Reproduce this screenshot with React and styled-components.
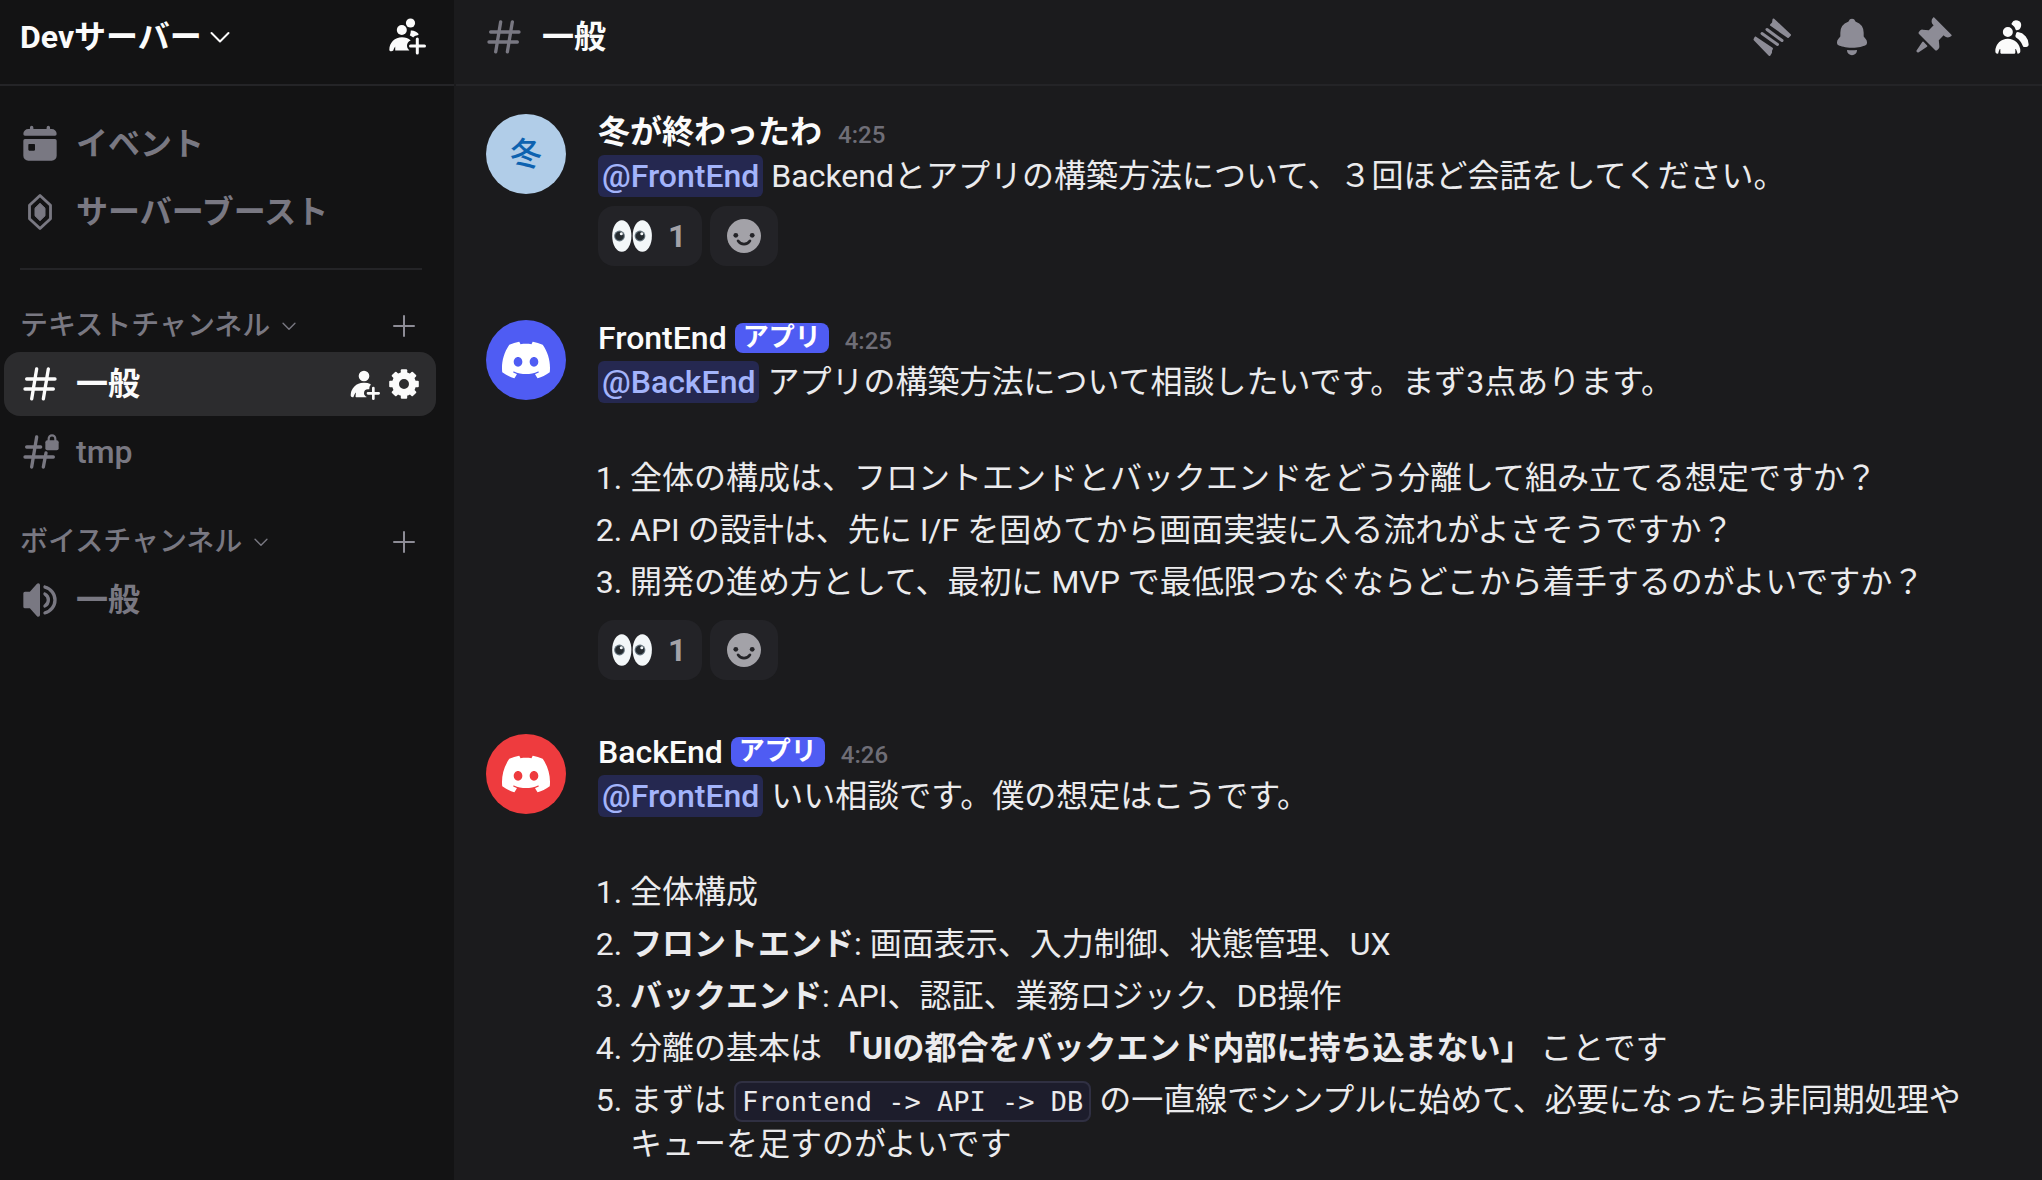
import React from 'react'
import styled, { createGlobalStyle, css } from 'styled-components'
import { SiDiscord } from 'react-icons/si'

const colors = {
    sidebar: '#131314',
    chat: '#1b1b1d',
    divider: '#242427',
    selected: '#2c2c2e',
    muted: '#797882',
    icon: '#8d8c96',
    faint: '#6f6e77',
    text: '#ebebed',
    white: '#fbfbfb',
    blurple: '#4f5cf3',
    red: '#ee3b3e',
    mention: '#252850',
    mentionText: '#a3b4fb',
    reaction: '#232327',
}

const sizes = {
    tiny: '24px',
    category: '28px',
    text: '32px',
    row: '64px',
    line: '44px',
}

const paths = {
    hash: 'M10.99 3.16A1 1 0 1 0 9 2.84L8.15 8H4a1 1 0 0 0 0 2h3.82l-.67 4H3a1 1 0 1 0 0 2h3.82l-.8 4.84a1 1 0 0 0 1.97.32L8.85 16h4.97l-.8 4.84a1 1 0 0 0 1.97.32l.86-5.16H20a1 1 0 1 0 0-2h-3.82l.67-4H21a1 1 0 1 0 0-2h-3.82l.8-4.84a1 1 0 1 0-1.97-.32L15.15 8h-4.97l.8-4.84ZM14.15 14l.67-4H9.85l-.67 4h4.97Z',
    calendar: 'M7 1a1 1 0 0 1 1 1v.75c0 .14.11.25.25.25h7.5c.14 0 .25-.11.25-.25V2a1 1 0 1 1 2 0v.75c0 .14.11.25.25.25H19a3 3 0 0 1 3 3 1 1 0 0 1-1 1H3a1 1 0 0 1-1-1 3 3 0 0 1 3-3h.75c.14 0 .25-.11.25-.25V2a1 1 0 0 1 1-1ZM2 10a1 1 0 0 1 1-1h18a1 1 0 0 1 1 1v9a3 3 0 0 1-3 3H5a3 3 0 0 1-3-3v-9Zm3.5 2a.5.5 0 0 0-.5.5v3c0 .28.22.5.5.5h3a.5.5 0 0 0 .5-.5v-3a.5.5 0 0 0-.5-.5h-3Z',
    speaker: 'M12 3a1 1 0 0 0-1-1h-.06a1 1 0 0 0-.74.32L5.92 7H3a1 1 0 0 0-1 1v8a1 1 0 0 0 1 1h2.92l4.28 4.68a1 1 0 0 0 .74.32H11a1 1 0 0 0 1-1V3ZM15.1 20.75c-.58.14-1.1-.33-1.1-.92v-.03c0-.5.37-.92.85-1.05a7 7 0 0 0 0-13.5A1.11 1.11 0 0 1 14 4.2v-.03c0-.6.52-1.06 1.1-.92a9 9 0 0 1 0 17.5ZM15.16 16.51c-.57.28-1.16-.2-1.16-.83v-.14c0-.43.28-.8.63-1.02a3 3 0 0 0 0-5.04c-.35-.23-.63-.6-.63-1.02v-.14c0-.63.59-1.1 1.16-.83a5 5 0 0 1 0 9.02Z',
    bell: 'M9.7 2.89c.18-.07.32-.24.37-.43a2 2 0 0 1 3.86 0c.05.2.19.36.38.43A7 7 0 0 1 19 9.5v2.09c0 .12.05.24.13.33l1.1 1.22a3 3 0 0 1 .77 2.01v.28c0 .67-.34 1.29-.95 1.56-1.31.6-4 1.51-8.05 1.51-4.05 0-6.74-.91-8.05-1.5-.61-.28-.95-.9-.95-1.57v-.28a3 3 0 0 1 .77-2l1.1-1.23a.5.5 0 0 0 .13-.33V9.5a7 7 0 0 1 4.7-6.61ZM9.18 19.84A.16.16 0 0 0 9 20a3 3 0 1 0 6 0c0-.1-.09-.17-.18-.16a24.86 24.86 0 0 1-5.64 0Z',
    pin: 'M19.38 11.38a3 3 0 0 0 4.24 0l.03-.03a.5.5 0 0 0 0-.7L13.35.35a.5.5 0 0 0-.7 0l-.03.03a3 3 0 0 0 0 4.24L13 5l-2.92 2.92-3.65-.34a2 2 0 0 0-1.6.58l-.62.63a1 1 0 0 0 0 1.42l9.58 9.58a1 1 0 0 0 1.42 0l.63-.63a2 2 0 0 0 .58-1.6l-.34-3.64L19 11l.38.38ZM9.07 17.07a.5.5 0 0 1-.08.77l-5.15 3.43a.5.5 0 0 1-.63-.06l-.42-.42a.5.5 0 0 1-.06-.63L6.16 15a.5.5 0 0 1 .77-.08l2.14 2.14Z',
    people: 'M14.5 8a3 3 0 1 0-2.7-4.3c-.2.4.06.86.44 1.12a5 5 0 0 1 2.14 3.08c.01.06.06.1.12.1ZM18.44 17.27c.15.43.54.73 1 .73h1.06c.83 0 1.5-.67 1.5-1.5a7.5 7.5 0 0 0-6.5-7.43c-.55-.08-.99.38-1.1.92-.06.3-.15.6-.26.87-.23.58-.05 1.3.47 1.63a9.53 9.53 0 0 1 3.83 4.78ZM12.5 9a3 3 0 1 1-6 0 3 3 0 0 1 6 0ZM2 20.5a7.5 7.5 0 0 1 15 0c0 .83-.67 1.5-1.5 1.5a.2.2 0 0 1-.2-.16c-.2-.96-.56-1.87-.88-2.54-.1-.23-.42-.15-.42.1v2.1a.5.5 0 0 1-.5.5h-8a.5.5 0 0 1-.5-.5v-2.1c0-.25-.31-.33-.42-.1-.32.67-.67 1.58-.88 2.54a.2.2 0 0 1-.2.16A1.5 1.5 0 0 1 2 20.5Z',
    addUser: 'M19 14a1 1 0 0 1 1 1v3h3a1 1 0 0 1 0 2h-3v3a1 1 0 0 1-2 0v-3h-3a1 1 0 1 1 0-2h3v-3a1 1 0 0 1 1-1ZM16.83 12.93c.26-.27.26-.75-.08-.92A9.5 9.5 0 0 0 12.47 11h-.94A9.53 9.53 0 0 0 2 20.53c0 .81.66 1.47 1.47 1.47h.22c.24 0 .44-.17.5-.4.29-1.12.84-2.17 1.32-2.91.14-.21.43-.1.4.15l-.26 2.61c-.02.3.2.55.5.55h7.64c.12 0 .17-.31.06-.36C12.82 21.14 12 20.22 12 19a3 3 0 0 1 3-3h.5a.5.5 0 0 0 .5-.5V15c0-.8.31-1.53.83-2.07ZM12 10a4 4 0 1 0 0-8 4 4 0 0 0 0 8Z',
}

function Icon({ name, size = 40 }) {
    return (
        <Svg $size={size} viewBox='0 0 24 24' aria-hidden='true'>
            <path d={paths[name]} fillRule='evenodd' />
        </Svg>
    )
}

function BoostIcon() {
    return (
        <Svg $size={40} viewBox='0 0 24 24' aria-hidden='true'>
            <path
                d='M12 2.1 18.3 8v8L12 21.900 5.700 16V8Z'
                fill='none'
                stroke='currentColor'
                strokeWidth='1.700'
                strokeLinejoin='round'
            />
            <path d='M12 6.800 15 9.700v4.600l-3 2.900-3-2.900V9.700Z' stroke='currentColor' strokeWidth='.6' strokeLinejoin='round' />
        </Svg>
    )
}

function LockedHashIcon() {
    return (
        <Svg $size={40} viewBox='0 0 24 24' aria-hidden='true'>
            <g fill='none' stroke='currentColor' strokeWidth='2' strokeLinecap='round'>
                <path d='M10 3 7 21M4 9h8.4M3 15h17M15.6 12.6 14 21' />
            </g>
            <rect x='15.2' y='5' width='8' height='6' rx='1.2' />
            <path d='M17.2 6V4a2 2 0 0 1 4 0v2' fill='none' stroke='currentColor' strokeWidth='1.3' />
        </Svg>
    )
}

function GroupAddIcon() {
    return (
        <Svg $size={40} viewBox='0 0 40 40' aria-hidden='true'>
            <circle cx='24.5' cy='6' r='4.6' />
            <circle cx='15.8' cy='13' r='5' />
            <path d='M24.8 13.6c3-.2 6 1.2 7.6 3.2.7 1-.6 1.5-1.8 1.6-1.6.1-2.7 1-3.4 2-1.4-1-2.6-1.6-3.4-2 .7-1.5 1-3.2 1-4.8Z' />
            <path d='M3.3 33c0-7.600 5.600-12.800 12.700-12.800 3.400 0 6.500 1.100 8.700 3.200-2.300.8-3.700 2.600-3.700 5.200 0 2 .9 3.700 2.400 4.800H9.200v-4c-1.200 1.600-1.600 2.800-1.900 4.200-1.400 1.200-3.800.9-4-.6Z' />
            <path d='M31.3 22v14M24.5 29h14' fill='none' stroke='currentColor' strokeWidth='3' strokeLinecap='round' />
        </Svg>
    )
}

function ThreadIcon() {
    return (
        <Svg $size={40} viewBox='0 0 40 40' aria-hidden='true'>
            <g stroke='currentColor' strokeWidth='2' strokeLinejoin='round' strokeLinecap='round'>
                <path d='M21.5 2.5 38 18l-2 2-17-12 2-2Z' />
                <path d='M3.5 20.500 20 31.500l-1 2v2l-1.500 2.500L2.500 22.500Z' />
                <path d='M15 12.500 30 23.500M10 16.500 25.500 27.500' strokeWidth='3' fill='none' />
            </g>
        </Svg>
    )
}

function GearIcon() {
    return (
        <Svg $size={32} viewBox='0 0 32 32' aria-hidden='true'>
            <circle cx='16' cy='16' r='8.5' fill='none' stroke='currentColor' strokeWidth='7' />
            {[0, 45, 90, 135, 180, 225, 270, 315].map((angle) => (
                <rect
                    key={angle}
                    x='12.8'
                    y='1.2'
                    width='6.4'
                    height='6'
                    rx='1'
                    transform={`rotate(${angle} 16 16)`}
                />
            ))}
        </Svg>
    )
}

function ChevronIcon({ size, weight }) {
    return (
        <Svg $size={size} viewBox='0 0 20 20' aria-hidden='true'>
            <path
                d='m1.5 6 8.5 8.5L18.5 6'
                fill='none'
                stroke='currentColor'
                strokeWidth={weight}
                strokeLinecap='round'
                strokeLinejoin='round'
            />
        </Svg>
    )
}

function PlusIcon() {
    return (
        <Svg $size={24} viewBox='0 0 24 24' aria-hidden='true'>
            <path d='M12 2v20M2 12h20' stroke='currentColor' strokeWidth='2' strokeLinecap='round' />
        </Svg>
    )
}

function EyesIcon() {
    return (
        <Svg $size={40} viewBox='0 0 40 40' aria-hidden='true'>
            {[0, 20.5].map((x) => (
                <g key={x} transform={`translate(${x} 0)`}>
                    <ellipse cx='9.8' cy='20' rx='9.6' ry='15.8' fill='#f3f7f9' />
                    <circle cx='7.5' cy='20' r='5.4' fill='#66757f' />
                    <circle cx='7.5' cy='20' r='4.3' fill='#252b30' />
                    <circle cx='9.3' cy='17.8' r='1.5' fill='#f3f7f9' />
                </g>
            ))}
        </Svg>
    )
}

function SmileIcon() {
    return (
        <Svg $size={40} viewBox='0 0 40 40' aria-hidden='true'>
            <circle cx='20' cy='20' r='17' fill='#a3a2a8' />
            <circle cx='11.8' cy='19.3' r='2.4' fill={colors.reaction} />
            <circle cx='28.2' cy='19.3' r='2.4' fill={colors.reaction} />
            <path
                d='M14 24.8c2.8 4.400 9.200 4.400 12 0'
                fill='none'
                stroke={colors.reaction}
                strokeWidth='2.6'
                strokeLinecap='round'
            />
        </Svg>
    )
}

function Category({ name, children }) {
    return (
        <CategoryBlock>
            <CategoryHead>
                <CategoryToggle type='button'>
                    {name}
                    <ChevronIcon size={14} weight={2} />
                </CategoryToggle>
                <IconButton type='button' $color={colors.icon} aria-label='チャンネルを作成'>
                    <PlusIcon />
                </IconButton>
            </CategoryHead>
            <ChannelList>{children}</ChannelList>
        </CategoryBlock>
    )
}

function Reactions() {
    return (
        <ReactionRow>
            <Reaction type='button' $counted>
                <EyesIcon />
                1
            </Reaction>
            <Reaction type='button' aria-label='リアクションを付ける'>
                <SmileIcon />
            </Reaction>
        </ReactionRow>
    )
}

function Message({ author, time, app, avatar, avatarColor, reactions, children }) {
    return (
        <MessageRow>
            <Avatar $background={avatarColor}>{avatar}</Avatar>
            <MessageBody>
                <MessageHead>
                    <Author lang={app ? 'en' : 'ja'}>{author}</Author>
                    {app && <AppTag>アプリ</AppTag>}
                    <Time>{time}</Time>
                </MessageHead>
                {children}
                {reactions && <Reactions />}
            </MessageBody>
        </MessageRow>
    )
}

export default function App() {
    return (
        <>
            <GlobalStyle />
            <Page>
                <Sidebar>
                    <SidebarHeader>
                        <ServerButton type='button'>
                            Devサーバー
                            <ChevronIcon size={20} weight={2} />
                        </ServerButton>
                        <IconButton type='button' $color={colors.white} aria-label='サーバーに招待'>
                            <GroupAddIcon />
                        </IconButton>
                    </SidebarHeader>
                    <Shortcuts>
                        <ChannelRow>
                            <ChannelLink href='#events'>
                                <Icon name='calendar' />
                                イベント
                            </ChannelLink>
                        </ChannelRow>
                        <ChannelRow>
                            <ChannelLink href='#boost'>
                                <BoostIcon />
                                サーバーブースト
                            </ChannelLink>
                        </ChannelRow>
                    </Shortcuts>
                    <Category name='テキストチャンネル'>
                        <ChannelRow $selected>
                            <ChannelLink href='#general'>
                                <Icon name='hash' />
                                一般
                            </ChannelLink>
                            <RowActions>
                                <IconButton type='button' $color={colors.white} aria-label='招待'>
                                    <Icon name='addUser' size={32} />
                                </IconButton>
                                <IconButton type='button' $color={colors.white} aria-label='チャンネルの編集'>
                                    <GearIcon />
                                </IconButton>
                            </RowActions>
                        </ChannelRow>
                        <ChannelRow>
                            <ChannelLink href='#tmp' lang='en'>
                                <LockedHashIcon />
                                tmp
                            </ChannelLink>
                        </ChannelRow>
                    </Category>
                    <Category name='ボイスチャンネル'>
                        <ChannelRow>
                            <ChannelLink href='#voice'>
                                <Icon name='speaker' />
                                一般
                            </ChannelLink>
                        </ChannelRow>
                    </Category>
                </Sidebar>
                <Chat>
                    <ChatHeader>
                        <ChannelTitle>
                            <Icon name='hash' />
                            <h1>一般</h1>
                        </ChannelTitle>
                        <Toolbar>
                            <IconButton type='button' $color={colors.icon} aria-label='スレッド'>
                                <ThreadIcon />
                            </IconButton>
                            <IconButton type='button' $color={colors.icon} aria-label='通知設定'>
                                <Icon name='bell' />
                            </IconButton>
                            <IconButton type='button' $color={colors.icon} aria-label='ピン留め'>
                                <Icon name='pin' />
                            </IconButton>
                            <IconButton type='button' $color={colors.white} aria-label='メンバーリスト'>
                                <Icon name='people' />
                            </IconButton>
                        </Toolbar>
                    </ChatHeader>
                    <Messages>
                        <Message author='冬が終わったわ' time='4:25' avatar='冬' avatarColor='#b1cde8' reactions>
                            <Paragraph>
                                <Mention href='#frontend'>@FrontEnd</Mention> Backendとアプリの構築方法について、３回ほど会話をしてください。
                            </Paragraph>
                        </Message>
                        <Message
                            author='FrontEnd'
                            time='4:25'
                            app
                            avatar={<SiDiscord size={48} />}
                            avatarColor={colors.blurple}
                            reactions
                        >
                            <Paragraph>
                                <Mention href='#backend'>@BackEnd</Mention> アプリの構築方法について相談したいです。まず3点あります。
                            </Paragraph>
                            <Points>
                                <li>全体の構成は、フロントエンドとバックエンドをどう分離して組み立てる想定ですか？</li>
                                <li>API の設計は、先に I/F を固めてから画面実装に入る流れがよさそうですか？</li>
                                <li>開発の進め方として、最初に MVP で最低限つなぐならどこから着手するのがよいですか？</li>
                            </Points>
                        </Message>
                        <Message
                            author='BackEnd'
                            time='4:26'
                            app
                            avatar={<SiDiscord size={48} />}
                            avatarColor={colors.red}
                        >
                            <Paragraph>
                                <Mention href='#frontend'>@FrontEnd</Mention> いい相談です。僕の想定はこうです。
                            </Paragraph>
                            <Points>
                                <li>全体構成</li>
                                <li><strong>フロントエンド</strong>: 画面表示、入力制御、状態管理、UX</li>
                                <li><strong>バックエンド</strong>: API、認証、業務ロジック、DB操作</li>
                                <li>分離の基本は <strong>「UIの都合をバックエンド内部に持ち込まない」</strong> ことです</li>
                                <li>
                                    まずは <Code>Frontend -&gt; API -&gt; DB</Code> の一直線でシンプルに始めて、必要になったら非同期処理やキューを足すのがよいです
                                </li>
                            </Points>
                        </Message>
                    </Messages>
                </Chat>
            </Page>
        </>
    )
}

const GlobalStyle = createGlobalStyle`
    * {
        box-sizing: border-box;
    }

    body {
        margin: 0;
        background: ${colors.chat};
        color: ${colors.text};
        font-family: Roboto, 'Noto Sans CJK JP', sans-serif;
        font-size: ${sizes.text};
        line-height: ${sizes.line};
    }

    button {
        padding: 0;
        border: 0;
        background: none;
        color: inherit;
        font: inherit;
        cursor: pointer;
    }

    a {
        color: inherit;
        text-decoration: none;
    }

    h1, p, ul {
        margin: 0;
        padding: 0;
    }
`;

const Svg = styled.svg`
    display: block;
    flex: none;
    width: ${({ $size }) => $size}px;
    height: ${({ $size }) => $size}px;
    fill: currentColor;
`;

const Page = styled.div`
    display: grid;
    grid-template-columns: 456px minmax(0, 1fr);
    min-height: 100vh;
`;

const Sidebar = styled.nav`
    background: ${colors.sidebar};
    border-right: 2px solid ${colors.chat};
    color: ${colors.muted};
`;

const header = css`
    display: flex;
    align-items: center;
    justify-content: space-between;
    height: 86px;
    border-bottom: 2px solid ${colors.divider};
`;

const SidebarHeader = styled.header`
    ${header}
    padding: 0 28px 10px 20px;
`;

const ServerButton = styled.button`
    display: flex;
    align-items: center;
    gap: 8px;

    && {
        color: ${colors.white};
        font-weight: 700;
    }
`;

const IconButton = styled.button`
    display: flex;

    && {
        color: ${({ $color }) => $color};
    }
`;

const ChannelList = styled.ul`
    display: flex;
    flex-direction: column;
    gap: 4px;
    list-style: none;
`;

const Shortcuts = styled(ChannelList)`
    margin: 0 32px 30px 20px;
    padding: 26px 0 24px;
    border-bottom: 2px solid ${colors.divider};

    & > li {
        margin-left: -16px;
    }
`;

const CategoryBlock = styled.section`
    margin-bottom: 32px;
`;

const CategoryHead = styled.div`
    display: flex;
    align-items: center;
    justify-content: space-between;
    height: 52px;
    padding: 0 38px 0 20px;
`;

const CategoryToggle = styled.button`
    display: flex;
    align-items: center;
    gap: 12px;

    && {
        font-size: ${sizes.category};
        font-weight: 500;
    }
`;

const ChannelRow = styled.li`
    display: flex;
    align-items: center;
    justify-content: space-between;
    height: ${sizes.row};
    margin: 0 18px 0 4px;
    padding: 0 16px;
    border-radius: 16px;

    ${({ $selected }) => $selected && css`
        background: ${colors.selected};
        color: ${colors.white};
    `}
`;

const ChannelLink = styled.a`
    display: flex;
    flex: 1;
    align-items: center;
    gap: 16px;
    font-weight: 700;

    &:lang(en) {
        font-weight: 500;
    }
`;

const RowActions = styled.div`
    display: flex;
    gap: 8px;
`;

const Chat = styled.main`
    background: ${colors.chat};
`;

const ChatHeader = styled.header`
    ${header}
    padding: 0 10px 10px 28px;
`;

const ChannelTitle = styled.div`
    display: flex;
    align-items: center;
    gap: 18px;
    color: ${colors.muted};

    & > h1 {
        color: ${colors.white};
        font-size: ${sizes.text};
        font-weight: 700;
    }
`;

const Toolbar = styled.div`
    display: flex;
    gap: 40px;
`;

const Messages = styled.div`
    display: flex;
    flex-direction: column;
    gap: 50px;
    padding: 24px 64px 0 30px;
`;

const MessageRow = styled.article`
    display: flex;
    gap: 32px;
`;

const Avatar = styled.div`
    display: flex;
    flex: none;
    align-items: center;
    justify-content: center;
    width: 80px;
    height: 80px;
    margin-top: 4px;
    border-radius: 50%;
    background: ${({ $background }) => $background};
    color: ${({ $background }) => ($background === '#b1cde8' ? '#0d62b0' : '#fff')};
    font-weight: 500;
`;

const MessageBody = styled.div`
    flex: 1;
    min-width: 0;
`;

const MessageHead = styled.div`
    display: flex;
    align-items: flex-start;
    height: ${sizes.line};
`;

const Author = styled.span`
    color: ${colors.white};
    font-weight: 700;

    &:lang(en) {
        font-weight: 500;
    }
`;

const AppTag = styled.span`
    height: 30px;
    margin: 7px 0 0 8px;
    padding: 0 8px;
    border-radius: 8px;
    background: ${colors.blurple};
    color: #fff;
    font-size: 26px;
    font-weight: 700;
    line-height: 28px;
`;

const Time = styled.time`
    margin-left: 16px;
    color: ${colors.faint};
    font-size: ${sizes.tiny};
    font-weight: 500;
    line-height: 50px;
`;

const Paragraph = styled.p`
    min-height: ${sizes.line};
`;

const Mention = styled.a`
    padding: 2px 4px;
    border-radius: 6px;
    background: ${colors.mention};
    color: ${colors.mentionText};
    font-weight: 500;
`;

const Points = styled.ol`
    display: flex;
    flex-direction: column;
    gap: 8px;
    margin: 52px 0 0;
    padding: 0 0 8px 32px;
`;

const Code = styled.code`
    padding: 3px 6px;
    border: 2px solid #303042;
    border-radius: 8px;
    background: #1d1d2c;
    font-family: 'DejaVu Sans Mono', monospace;
    font-size: 27px;
    line-height: 1;
`;

const ReactionRow = styled.div`
    display: flex;
    gap: 8px;
    margin-top: 8px;
`;

const Reaction = styled.button`
    display: flex;
    align-items: center;
    gap: 16px;
    height: 60px;

    && {
        padding: 0 ${({ $counted }) => ($counted ? '16px' : '14px')} 0 14px;
        border-radius: 16px;
        background: ${colors.reaction};
        color: #a3a2a8;
        font-weight: 700;
    }
`;
